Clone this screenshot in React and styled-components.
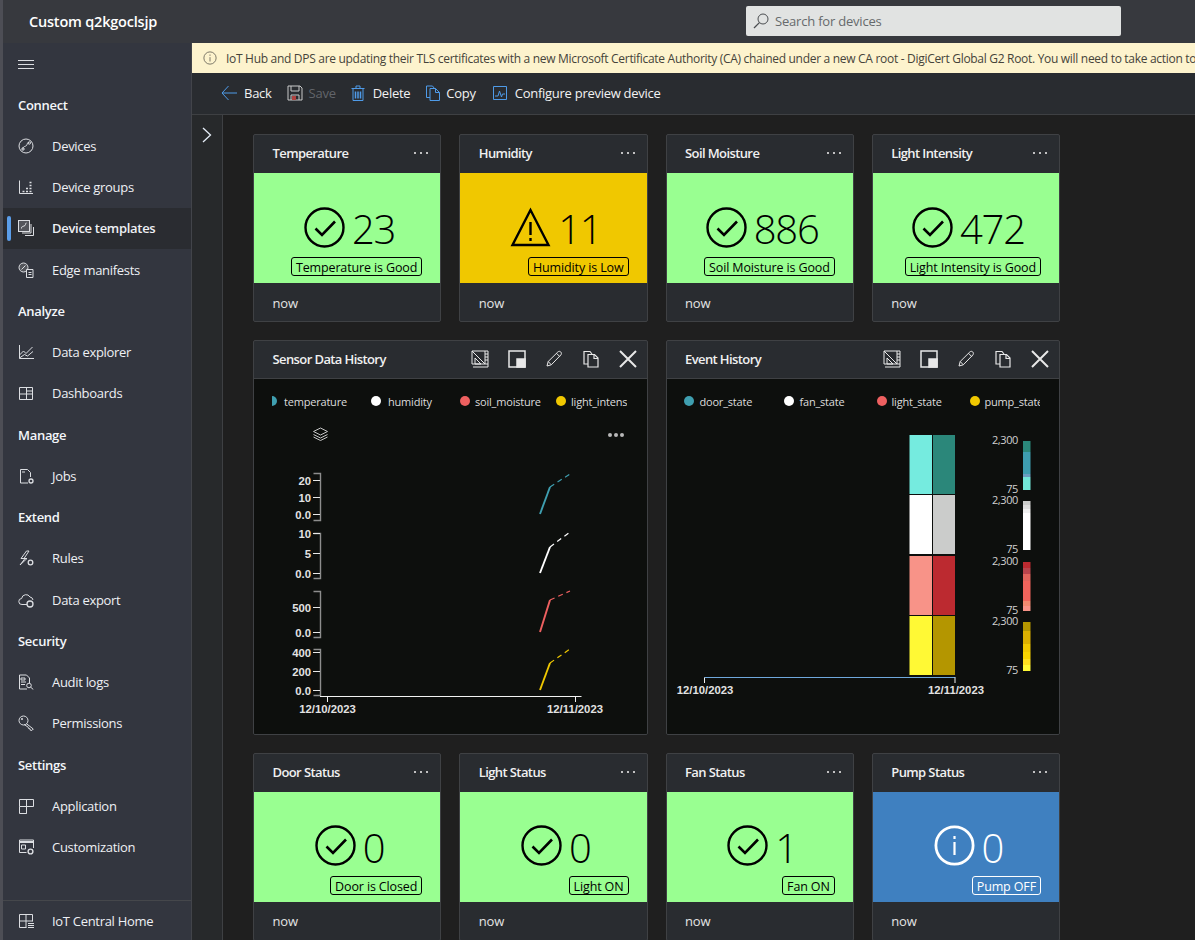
import styled, { createGlobalStyle } from "styled-components";

const GlobalStyle = createGlobalStyle`
  html, body {
    margin: 0;
    height: 940px;
    overflow: hidden;
    background: #1f1f1f;
    font-family: "Open Sans", "Noto Sans", "Liberation Sans", sans-serif;
  }
  * {
    box-sizing: border-box;
  }
`;

const Shell = styled.div`
  display: flex;
  flex-direction: column;
  height: 940px;
  border-left: 3px solid #4d4e55;
  background: #1f1f1f;
  color: #f2f2f2;
  font-size: 13px;
  letter-spacing: -0.2px;
`;

const TopBar = styled.header`
  display: flex;
  align-items: center;
  flex: none;
  height: 43px;
  padding: 0 0 1px 26px;
  background: #37393e;
`;

const Brand = styled.div`
  width: 717px;
  font-size: 14.5px;
  font-weight: 600;
  letter-spacing: -0.2px;
  color: #fff;
`;

const SearchBox = styled.div`
  display: flex;
  align-items: center;
  gap: 6px;
  width: 375px;
  height: 30px;
  padding-left: 7px;
  border-radius: 2px;
  background: #e1e3e2;
  color: #666a6c;
`;

const Body = styled.div`
  display: flex;
  flex: 1;
  min-height: 0;
`;

const Sidebar = styled.nav`
  display: flex;
  flex-direction: column;
  flex: none;
  width: 189px;
  background: #33363f;
  border-right: 1px solid #42444a;
`;

const NavList = styled.div`
  flex: 1;
`;

const Burger = styled.div`
  display: flex;
  align-items: center;
  height: 41px;
  padding-left: 15px;
`;

const NavHeading = styled.div`
  display: flex;
  align-items: center;
  height: 41.25px;
  padding-left: 15px;
  font-weight: 600;
  letter-spacing: -0.3px;
  color: #f4f6fa;
`;

const NavItem = styled.div`
  position: relative;
  display: flex;
  align-items: center;
  height: 41.25px;
  padding-left: 15px;
  gap: 18px;
  color: #eef0f4;
  font-weight: ${(props) => (props.$active ? 600 : 400)};
  letter-spacing: -0.3px;
  background: ${(props) => (props.$active ? "#2a2c31" : "transparent")};

  &::before {
    content: "";
    display: ${(props) => (props.$active ? "block" : "none")};
    position: absolute;
    left: 4px;
    top: 8px;
    width: 4px;
    height: 25px;
    border-radius: 2px;
    background: #5b9ee9;
  }
`;

const NavFooter = styled.div`
  flex: none;
  height: 40px;
  border-top: 1px solid #45474b;

  ${NavItem} {
    height: 39px;
  }
`;

const NavIcon = styled.svg`
  flex: none;
  width: 16px;
  height: 16px;
  fill: none;
  stroke: ${(props) => props.$tone || "#dcdee2"};
  stroke-width: 1;
`;

const Main = styled.main`
  display: flex;
  flex-direction: column;
  flex: 1;
  min-width: 0;
`;

const Banner = styled.div`
  display: flex;
  align-items: center;
  flex: none;
  gap: 9px;
  height: 30px;
  padding-left: 11px;
  background: #fdf3cd;
  color: #45433a;
  font-size: 12px;
  letter-spacing: -0.3px;
  overflow: hidden;
  white-space: nowrap;
`;

const Toolbar = styled.div`
  display: flex;
  align-items: center;
  flex: none;
  height: 42px;
  padding: 0 0 1px 29px;
  background: #292c30;
  border-bottom: 1px solid #3e4043;
  letter-spacing: -0.27px;
`;

const ToolButton = styled.div`
  display: flex;
  align-items: center;
  gap: ${(props) => props.$gap || 7}px;
  margin-right: ${(props) => props.$after || 0}px;
  color: ${(props) => (props.$disabled ? "#62656a" : "#f2f2f2")};
`;

const ToolIcon = styled.svg`
  flex: none;
  width: ${(props) => props.$size || 16}px;
  height: ${(props) => props.$size || 16}px;
  fill: none;
  stroke: ${(props) => props.$tone || "#4f9be8"};
  stroke-width: ${(props) => props.$weight || 1};
`;

const Workspace = styled.div`
  display: flex;
  flex: 1;
  min-height: 0;
`;

const Rail = styled.div`
  flex: none;
  width: 31px;
  padding: 12px 0 0 7px;
  background: #27292b;
  border-right: 1px solid #3e4043;
`;

const Canvas = styled.div`
  flex: 1;
  padding: 19px 0 0 30px;
  overflow: hidden;
`;

const Board = styled.div`
  display: grid;
  grid-template-columns: repeat(4, 188.25px);
  grid-auto-rows: 188.25px;
  gap: 18px;
`;

const Card = styled.section`
  display: flex;
  flex-direction: column;
  background: #292c30;
  border: 1px solid #3f4144;
  border-radius: 2px;
  overflow: hidden;
`;

const CardHeader = styled.div`
  display: flex;
  align-items: center;
  justify-content: space-between;
  flex: none;
  height: 38px;
  padding: 0 11px 1.5px 18.5px;
`;

const CardTitle = styled.div`
  font-weight: 600;
  letter-spacing: -0.6px;
  color: #f0f0f0;
`;

const MoreDots = styled.svg`
  width: 16px;
  height: 4px;
  fill: #e6e6e6;
`;

const Tile = styled.div`
  display: flex;
  flex-direction: column;
  align-items: center;
  flex: none;
  height: 110px;
  padding: 34px 0 0 5px;
  background: ${(props) => props.$bg};
  color: ${(props) => props.$fg};
`;

const Reading = styled.div`
  display: flex;
  align-items: center;
  gap: 7px;
  height: 40px;
`;

const StatusIcon = styled.svg`
  flex: none;
  width: 41px;
  height: 41px;
  fill: none;
  stroke: currentColor;
`;

const Value = styled.div`
  padding-top: 4px;
  font-size: 40px;
  font-weight: 300;
  line-height: 46px;
  letter-spacing: -1.2px;
`;

const Chip = styled.div`
  align-self: flex-end;
  margin: 10px 18px 0 0;
  height: 19px;
  padding: 1px 4px 0;
  border: 1px solid currentColor;
  border-radius: 3px;
  line-height: 17px;
  font-size: 12.5px;
  letter-spacing: -0.13px;
  white-space: nowrap;
`;

const CardFooter = styled.div`
  display: flex;
  align-items: center;
  flex: 1;
  padding: 1px 0 0 18.5px;
  color: #e4e4e4;
`;

const Panel = styled(Card)`
  grid-column: span 2;
  grid-row: span 2;
`;

const PanelHeader = styled(CardHeader)`
  border-bottom: 1px solid #3f4144;
  padding-right: 10px;
`;

const PanelTools = styled.div`
  display: flex;
  align-items: center;
  gap: 19px;
`;

const PanelIcon = styled.svg`
  width: 18px;
  height: 18px;
  fill: none;
  stroke: #e8e8e8;
  stroke-width: ${(props) => props.$weight || 1};
`;

const PanelBody = styled.div`
  flex: 1;
  background: #0d0f0d;
`;

const Legend = styled.div`
  display: flex;
  align-items: center;
  height: 44px;
  width: ${(props) => props.$width}px;
  margin-left: ${(props) => props.$left}px;
  overflow: hidden;
`;

const LegendItem = styled.div`
  display: flex;
  align-items: center;
  flex: none;
  gap: ${(props) => props.$gap || 6}px;
  width: ${(props) => props.$width}px;
  margin-left: ${(props) => props.$shift || 0}px;
  font-size: 11px;
  letter-spacing: -0.2px;
  color: #dcdcdc;
  white-space: nowrap;
`;

const LegendDot = styled.span`
  flex: none;
  width: 10px;
  height: 10px;
  border-radius: 50%;
  background: ${(props) => props.$color};
`;

const Plot = styled.svg`
  display: block;
  width: 392px;
  height: 310px;
  font-family: "Liberation Sans", Arial, sans-serif;
  font-size: 11.3px;
  font-weight: 700;
  letter-spacing: 0;
`;

const ScaleLabel = styled.text`
  font-family: "Open Sans", sans-serif;
  font-size: 11px;
  font-weight: 400;
  letter-spacing: -0.4px;
  fill: #d0d0d0;
  text-anchor: end;
`;

const navSections = [
  {
    title: "Connect",
    items: [
      ["Devices", "devices"],
      ["Device groups", "groups"],
      ["Device templates", "templates", true],
      ["Edge manifests", "edge"],
    ],
  },
  {
    title: "Analyze",
    items: [
      ["Data explorer", "explorer"],
      ["Dashboards", "dashboards"],
    ],
  },
  { title: "Manage", items: [["Jobs", "jobs"]] },
  {
    title: "Extend",
    items: [
      ["Rules", "rules"],
      ["Data export", "export"],
    ],
  },
  {
    title: "Security",
    items: [
      ["Audit logs", "audit"],
      ["Permissions", "permissions"],
    ],
  },
  {
    title: "Settings",
    items: [
      ["Application", "application"],
      ["Customization", "customization"],
    ],
  },
];

const navGlyphs = {
  devices: (
    <>
      <circle cx="8" cy="8" r="7" />
      <path d="M5 11.5C4.5 8 7.5 8.8 8.5 7.5S9 4.5 11 4.5" />
      <circle cx="11.3" cy="5" r="1.2" />
      <circle cx="5" cy="11" r="1.2" />
    </>
  ),
  groups: (
    <>
      <path d="M1.5 1.5v13h13.5" />
      <path d="M4.5 12.5h2M8 12.5h2M11.5 12.5h2M8 9.5h2M11.5 9.5h2M11.5 6.5h2M11.5 3.5h2" strokeWidth="1.6" />
    </>
  ),
  templates: (
    <>
      <rect x="0.5" y="0.5" width="11" height="11" fill="#54565c" />
      <path d="M13 4v9H4M15.5 7v8.5H7" />
      <path d="M3.5 8.5C3 6 6 6.5 7 5.5S7 3 8.5 3" />
    </>
  ),
  edge: (
    <>
      <circle cx="5.5" cy="5.5" r="4.5" fill="#54565c" />
      <path d="M3.5 7.5L7.5 3.5" />
      <path d="M8.5 7.5h6.5v8H8.5zM10.5 10.5h3M10.5 12.5h3" fill="#33363f" />
    </>
  ),
  explorer: (
    <>
      <path d="M1.5 1v13.5H16" />
      <path d="M1.5 11l4-4 2.5 2.5L14.5 3" />
      <path d="M1.5 14l5-3.5 3 1.5 5.5-4.5" />
    </>
  ),
  dashboards: <path d="M1.5 2.5h13v12h-13zM1.5 9h13M8.5 2.5V14.5M8.5 6h6" />,
  jobs: (
    <>
      <path d="M10 15H2.5V1.5h7l3 3V9" />
      <path d="M4 4h3" />
      <circle cx="13" cy="13" r="2" strokeWidth="1.3" />
    </>
  ),
  rules: (
    <>
      <path d="M8.5 1L3 8.5h4L2 15l7-6.5H6L11 1z" />
      <circle cx="12.5" cy="12.5" r="2.3" strokeWidth="1.3" />
    </>
  ),
  export: (
    <>
      <path d="M9 12.5H4a3 3 0 0 1-.4-6A4.5 4.5 0 0 1 12 5a3.5 3.5 0 0 1 3 3" />
      <circle cx="12" cy="12" r="3" strokeWidth="1.3" />
    </>
  ),
  audit: (
    <>
      <path d="M11.5 9V4l-3-3H1.5v14H9" />
      <path d="M3 4h4v2H3zM3 8h5M3 10.5h4" />
      <circle cx="11" cy="11.5" r="2.3" />
      <path d="M12.7 13.2l2.6 2.3" />
    </>
  ),
  permissions: (
    <>
      <circle cx="5.5" cy="5.5" r="4.5" />
      <path d="M8.5 8.8l6.8 5.2-1.5 1.5-1.5-.3-.3-1.4-1.4-.3-.4-1.3-4-2.7" />
      <circle cx="4" cy="4" r="0.7" />
    </>
  ),
  application: <path d="M1.5 1.5h14v7h-14zM1.5 8.5v7h7v-14M8.5 8.5v7" />,
  customization: (
    <>
      <path d="M1.5 1h14v8M1.5 1v12.5h7" />
      <path d="M1.5 3h14" strokeWidth="2" />
      <path d="M3.5 6h4v4h-4z" />
      <circle cx="12.5" cy="12.5" r="2.4" strokeWidth="1.4" />
    </>
  ),
  home: (
    <>
      <path d="M1.5 1.5h13v7M1.5 1.5v13h7M1.5 8h13M8 1.5v13" />
      <path d="M10 10.5h6M10 12.5h6M10 14.5h6" />
    </>
  ),
};

const tileTones = {
  good: { bg: "#99ff91", fg: "#000" },
  warn: { bg: "#f0c800", fg: "#000" },
  info: { bg: "#3f80c0", fg: "#fff" },
};

const topCards = [
  { title: "Temperature", value: "23", chip: "Temperature is Good", tone: "good" },
  { title: "Humidity", value: "11", chip: "Humidity is Low", tone: "warn" },
  { title: "Soil Moisture", value: "886", chip: "Soil Moisture is Good", tone: "good" },
  { title: "Light Intensity", value: "472", chip: "Light Intensity is Good", tone: "good" },
];

const bottomCards = [
  { title: "Door Status", value: "0", chip: "Door is Closed", tone: "good" },
  { title: "Light Status", value: "0", chip: "Light ON", tone: "good" },
  { title: "Fan Status", value: "1", chip: "Fan ON", tone: "good" },
  { title: "Pump Status", value: "0", chip: "Pump OFF", tone: "info" },
];

const TEAL = "#3f9fb0";
const RED = "#ee6060";
const YELLOW = "#f0c800";

const sensorAxes = [
  { top: 473, bottom: 521, ticks: [[480, "20"], [497, "10"], [514, "0.0"]], color: TEAL, line: [514, 487, 474] },
  { top: 533, bottom: 579, ticks: [[533, "10"], [553, "5"], [573, "0.0"]], color: "#fff", line: [573, 547, 532] },
  { top: 591, bottom: 638, ticks: [[607, "500"], [632, "0.0"]], color: RED, line: [632, 600, 591] },
  { top: 649, bottom: 696, ticks: [[652, "400"], [671, "200"], [690, "0.0"]], color: YELLOW, line: [690, 663, 649] },
];

const heatRows = [
  { top: 435, left: "#75ebdf", right: "#2b877a" },
  { top: 495, left: "#ffffff", right: "#cbcccb" },
  { top: 556, left: "#f89388", right: "#bc2a30" },
  { top: 616, left: "#fff935", right: "#b49600" },
];

const scaleBars = [
  { top: 441, stops: [["#2b877a", 11], ["#3e9db0", 22], ["#6b9cc0", 3], ["#72e6d8", 13]] },
  { top: 501, stops: [["#cbcccb", 4], ["#dddddd", 4], ["#f0f0f0", 4], ["#ffffff", 37]] },
  { top: 562, stops: [["#bc2a30", 6], ["#b8444c", 6], ["#e0645c", 7], ["#f0645c", 20], ["#f08a70", 5], ["#f89388", 5]] },
  { top: 622, stops: [["#b49600", 9], ["#dcb000", 13], ["#f0c800", 8], ["#f8d400", 7], ["#ffe020", 6], ["#fff935", 6]] },
];

const Dots = () => (
  <MoreDots viewBox="0 0 16 4">
    <circle cx="2" cy="2" r="1.1" />
    <circle cx="8" cy="2" r="1.1" />
    <circle cx="14" cy="2" r="1.1" />
  </MoreDots>
);

const ToneIcon = ({ tone }) => {
  if (tone === "warn") {
    return (
      <StatusIcon viewBox="0 0 41 41" strokeWidth="2.4">
        <path d="M20.5 3L2.5 38h36z" strokeLinejoin="miter" />
        <path d="M20.5 15v13M20.5 31v3" />
      </StatusIcon>
    );
  }
  if (tone === "info") {
    return (
      <StatusIcon viewBox="0 0 41 41" strokeWidth="2.8">
        <circle cx="20.5" cy="20.5" r="18.6" />
        <path d="M20.5 17v13M20.5 11v3" strokeWidth="2.2" />
      </StatusIcon>
    );
  }
  return (
    <StatusIcon viewBox="0 0 41 41" strokeWidth="2.4">
      <circle cx="20.5" cy="20.5" r="19" />
      <path d="M11.5 21.5l6.5 6.5L31 14.5" strokeWidth="2.6" />
    </StatusIcon>
  );
};

const KpiCard = ({ title, value, chip, tone }) => (
  <Card>
    <CardHeader>
      <CardTitle>{title}</CardTitle>
      <Dots />
    </CardHeader>
    <Tile $bg={tileTones[tone].bg} $fg={tileTones[tone].fg}>
      <Reading>
        <ToneIcon tone={tone} />
        <Value>{value}</Value>
      </Reading>
      <Chip>{chip}</Chip>
    </Tile>
    <CardFooter>now</CardFooter>
  </Card>
);

const PanelActions = () => (
  <PanelTools>
    <PanelIcon viewBox="0 0 18 18">
      <path d="M1 1l13 13H1zM4 8v6h6zM1 1h16v16H2" />
      <path d="M14 1v13h3M14 4h3M14 7h3M14 10h3" />
    </PanelIcon>
    <PanelIcon viewBox="0 0 18 18" $weight={1.5}>
      <rect x="1" y="1" width="16" height="16" />
      <rect x="9" y="9" width="8" height="8" fill="#e8e8e8" />
    </PanelIcon>
    <PanelIcon viewBox="0 0 18 18">
      <path d="M2 16l1.2-4.5L12.8 2c1-.9 2.2-.9 3 0s.8 2 0 3L6.3 14.8z" />
      <path d="M3.2 11.5l3.1 3.3M11.5 3.3l3.2 3.2" />
    </PanelIcon>
    <PanelIcon viewBox="0 0 18 18" $weight={1.2}>
      <path d="M6 14H2V1.5h6L10 4" />
      <path d="M6 4.5h6.5l3.5 3.5v9H6z" />
      <path d="M12 4.5V8.5h4" />
    </PanelIcon>
    <PanelIcon viewBox="0 0 18 18" $weight={2}>
      <path d="M1 1l16 16M17 1L1 17" />
    </PanelIcon>
  </PanelTools>
);

const SensorPlot = () => (
  <Plot viewBox="254 423 392 310">
    <g fill="none" stroke="#c4c4c4" strokeWidth="1">
      <path d="M320.5 428l-7 3.5 7 3.5 7-3.5zM313.5 434.5l7 3.5 7-3.5M313.5 437l7 3.5 7-3.5" />
    </g>
    <g fill="#b8b8b8">
      <circle cx="610" cy="435" r="2" />
      <circle cx="616" cy="435" r="2" />
      <circle cx="622" cy="435" r="2" />
    </g>
    {sensorAxes.map((axis) => (
      <g key={axis.top}>
        <path
          d={`M313.5 ${axis.top + 0.5}H320.5V${axis.bottom - 0.5}H313.5`}
          fill="none"
          stroke="#8d8d8d"
          strokeWidth="1.4"
        />
        {axis.ticks.map(([y, label]) => (
          <g key={label}>
            <path d={`M313 ${y + 0.5}H320`} stroke="#e8e8e8" />
            <text x="311" y={y + 4.5} textAnchor="end" fill="#e2e2e2">
              {label}
            </text>
          </g>
        ))}
        <path
          d={`M540 ${axis.line[0]}L550 ${axis.line[1]}`}
          fill="none"
          stroke={axis.color}
          strokeWidth="1.9"
        />
        <path
          d={`M550 ${axis.line[1]}L570 ${axis.line[2]}`}
          fill="none"
          stroke={axis.color}
          strokeWidth="1.2"
          strokeDasharray="5 4"
        />
      </g>
    ))}
    <path d="M320 696.5H581.5M327.5 696V702M575.5 696V702" fill="none" stroke="#f2f2f2" />
    <text x="327.5" y="713" textAnchor="middle" fill="#e2e2e2">
      12/10/2023
    </text>
    <text x="575" y="713" textAnchor="middle" fill="#e2e2e2">
      12/11/2023
    </text>
  </Plot>
);

const EventPlot = () => (
  <Plot viewBox="667 423 392 310">
    {heatRows.map((row) => (
      <g key={row.top}>
        <rect x="909.5" y={row.top} width="22.5" height="59" fill={row.left} />
        <rect x="933" y={row.top} width="22" height="59" fill={row.right} />
      </g>
    ))}
    <path d="M704.5 677.5H955.5" stroke="#6fa8dc" />
    <path d="M704.5 677.5V683M955 677.5V683" stroke="#f2f2f2" />
    <text x="705" y="694" textAnchor="middle" fill="#e2e2e2">
      12/10/2023
    </text>
    <text x="956" y="694" textAnchor="middle" fill="#e2e2e2">
      12/11/2023
    </text>
    {scaleBars.map((bar) => {
      let y = bar.top;
      return (
        <g key={bar.top}>
          {bar.stops.map(([color, size]) => {
            const segment = <rect key={color} x="1023" y={y} width="7.5" height={size} fill={color} />;
            y += size;
            return segment;
          })}
          <ScaleLabel x="1018" y={bar.top + 2.5}>
            2,300
          </ScaleLabel>
          <ScaleLabel x="1018" y={bar.top + 52}>
            75
          </ScaleLabel>
        </g>
      );
    })}
  </Plot>
);

const App = () => (
  <>
    <GlobalStyle />
    <Shell>
      <TopBar>
        <Brand>Custom q2kgoclsjp</Brand>
        <SearchBox>
          <NavIcon viewBox="0 0 16 16" $tone="#4a4d50">
            <circle cx="10" cy="6" r="5" />
            <path d="M6.4 9.6L1 15" strokeWidth="1.3" />
          </NavIcon>
          Search for devices
        </SearchBox>
      </TopBar>
      <Body>
        <Sidebar>
          <NavList>
            <Burger>
              <NavIcon viewBox="0 0 16 16">
                <path d="M0 4.5h16M0 8.5h16M0 12.5h16" />
              </NavIcon>
            </Burger>
            {navSections.map((section) => (
              <div key={section.title}>
                <NavHeading>{section.title}</NavHeading>
                {section.items.map(([label, glyph, active]) => (
                  <NavItem key={label} $active={active}>
                    <NavIcon viewBox="0 0 16 16">{navGlyphs[glyph]}</NavIcon>
                    {label}
                  </NavItem>
                ))}
              </div>
            ))}
          </NavList>
          <NavFooter>
            <NavItem>
              <NavIcon viewBox="0 0 16 16">{navGlyphs.home}</NavIcon>
              IoT Central Home
            </NavItem>
          </NavFooter>
        </Sidebar>
        <Main>
          <Banner>
            <ToolIcon viewBox="0 0 16 16" $tone="#6b685c" $size={14}>
              <circle cx="8" cy="8" r="7" />
              <path d="M8 7v5M8 4v1.5" />
            </ToolIcon>
            <span>
              IoT Hub and DPS are updating their TLS certificates with a new Microsoft Certificate Authority (CA)
              chained under a new CA root - DigiCert Global G2 Root. You will need to take action to ensure your
              devices can connect.
            </span>
          </Banner>
          <Toolbar>
            <ToolButton $after={15}>
              <ToolIcon viewBox="0 0 16 16">
                <path d="M7.5 1L1 8l6.5 7M1 8h15" />
              </ToolIcon>
              Back
            </ToolButton>
            <ToolButton $after={14} $gap={6} $disabled>
              <ToolIcon viewBox="0 0 16 16" $tone="#c9c9c9">
                <path d="M1 1h12l2 2v12H1z" />
                <path d="M4 1v5h8V1M4 15v-5h8v5" />
                <rect x="5" y="11" width="4" height="4" fill="#b0413e" stroke="none" />
              </ToolIcon>
              Save
            </ToolButton>
            <ToolButton $after={15} $gap={7}>
              <ToolIcon viewBox="0 0 16 16">
                <path d="M3 4v11.5h10V4M1.5 3.5h13M6 3.5V1h4v2.5" />
                <path d="M5.5 6.5v7M8 6.5v7M10.5 6.5v7" strokeWidth="1.5" />
              </ToolIcon>
              Delete
            </ToolButton>
            <ToolButton $after={16} $gap={5}>
              <ToolIcon viewBox="0 0 16 16">
                <path d="M5 12.5H1.5V1h6l2 2.5" />
                <path d="M5 3.5h5.5l4 4v8H5zM10.5 3.5v4h4" />
              </ToolIcon>
              Copy
            </ToolButton>
            <ToolButton>
              <ToolIcon viewBox="0 0 16 16">
                <path d="M1.5 1.5h13v13h-13z" />
                <path d="M3 11h3l1.5-5 2 6 1-3H13" />
              </ToolIcon>
              Configure preview device
            </ToolButton>
          </Toolbar>
          <Workspace>
            <Rail>
              <ToolIcon viewBox="0 0 16 16" $tone="#e6eef8" $weight={1.3}>
                <path d="M4 1l7.5 7L4 15" />
              </ToolIcon>
            </Rail>
            <Canvas>
              <Board>
                {topCards.map((card) => (
                  <KpiCard key={card.title} {...card} />
                ))}
                <Panel>
                  <PanelHeader>
                    <CardTitle>Sensor Data History</CardTitle>
                    <PanelActions />
                  </PanelHeader>
                  <PanelBody>
                    <Legend $left={18} $width={355}>
                      <LegendItem $width={104} $shift={-5} $gap={7}>
                        <LegendDot $color={TEAL} />
                        temperature
                      </LegendItem>
                      <LegendItem $width={89} $gap={7}>
                        <LegendDot $color="#fff" />
                        humidity
                      </LegendItem>
                      <LegendItem $width={96} $gap={5}>
                        <LegendDot $color={RED} />
                        soil_moisture
                      </LegendItem>
                      <LegendItem $width={100} $gap={5}>
                        <LegendDot $color={YELLOW} />
                        light_intensity
                      </LegendItem>
                    </Legend>
                    <SensorPlot />
                  </PanelBody>
                </Panel>
                <Panel>
                  <PanelHeader>
                    <CardTitle>Event History</CardTitle>
                    <PanelActions />
                  </PanelHeader>
                  <PanelBody>
                    <Legend $left={17} $width={356}>
                      <LegendItem $width={100}>
                        <LegendDot $color={TEAL} />
                        door_state
                      </LegendItem>
                      <LegendItem $width={93}>
                        <LegendDot $color="#fff" />
                        fan_state
                      </LegendItem>
                      <LegendItem $width={93} $gap={5}>
                        <LegendDot $color={RED} />
                        light_state
                      </LegendItem>
                      <LegendItem $width={100} $gap={5}>
                        <LegendDot $color={YELLOW} />
                        pump_state
                      </LegendItem>
                    </Legend>
                    <EventPlot />
                  </PanelBody>
                </Panel>
                {bottomCards.map((card) => (
                  <KpiCard key={card.title} {...card} />
                ))}
              </Board>
            </Canvas>
          </Workspace>
        </Main>
      </Body>
    </Shell>
  </>
);

export default App;
